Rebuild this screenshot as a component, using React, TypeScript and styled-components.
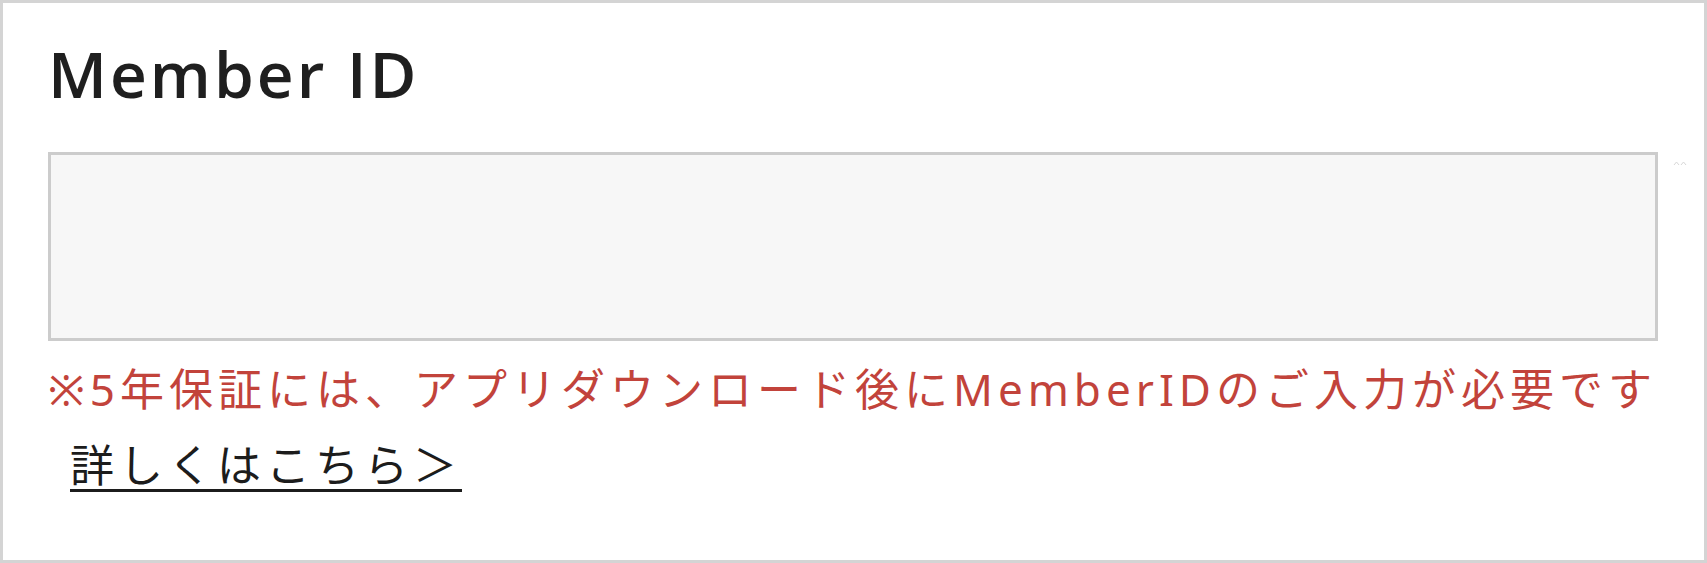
import styled, { createGlobalStyle } from 'styled-components';

const GlobalStyle = createGlobalStyle`
  html, body {
    margin: 0;
    padding: 0;
    background: #fff;
  }
  * {
    box-sizing: border-box;
  }
`;

const Frame = styled.section`
  height: 563px;
  border: 3px solid #d4d4d4;
  padding: 39px 46px 0 45px;
  background: #fff;
  font-family: "Noto Sans", "Noto Sans CJK JP", sans-serif;
`;

const Title = styled.h2`
  margin: 0;
  font-family: "Open Sans", "Noto Sans", sans-serif;
  font-size: 64px;
  line-height: 64px;
  font-weight: 600;
  letter-spacing: 3px;
  color: #1f1f1f;
`;

const FieldRow = styled.div`
  position: relative;
  margin-top: 46px;
`;

const TextBox = styled.input`
  display: block;
  width: 100%;
  height: 189px;
  border: 3px solid #cccccc;
  background: #f7f7f7;
  outline: none;
  padding: 0 20px;
  font-size: 44px;
  font-family: inherit;
`;

const ResizeMark = styled.svg`
  position: absolute;
  right: -30px;
  top: 6px;
`;

const Notice = styled.p`
  margin: 18px 0 0;
  font-size: 44px;
  line-height: 60px;
  letter-spacing: 5px;
  color: #c2433b;
  white-space: nowrap;
`;

const DetailLink = styled.a`
  display: inline-block;
  margin: 16px 0 0 22px;
  font-size: 44px;
  line-height: 60px;
  letter-spacing: 5px;
  color: #1c1c1c;
  text-decoration: underline;
  text-decoration-thickness: 3px;
  text-underline-offset: 7px;
`;

const App = () => {
  return (
    <>
      <GlobalStyle />
      <Frame>
        <Title>Member ID</Title>
        <FieldRow>
          <TextBox type="text" aria-label="Member ID" />
          <ResizeMark width="16" height="10" viewBox="0 0 16 10">
            <path d="M2 7 L4.5 4 L7 7 M9 7 L11.5 4 L14 7" fill="none" stroke="#d8d8d8" strokeWidth="1" />
          </ResizeMark>
        </FieldRow>
        <Notice>※5年保証には、アプリダウンロード後にMemberIDのご入力が必要です</Notice>
        <DetailLink href="#">詳しくはこちら＞</DetailLink>
      </Frame>
    </>
  );
};

export default App;
